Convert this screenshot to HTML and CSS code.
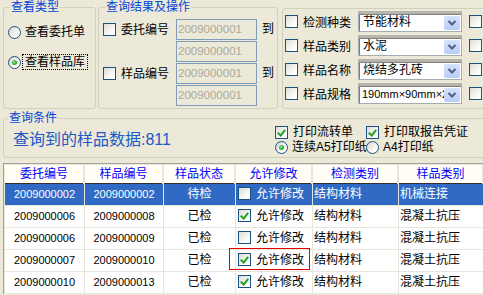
FILE: index.html
```html
<!DOCTYPE html>
<html lang="zh-CN">
<head>
    <meta charset="UTF-8">
    <meta name="viewport" content="width=device-width, initial-scale=1.0">
    <title>样品库查询</title>
    <link rel="stylesheet" href="styles.css">
</head>
<body>
    <div class="top">
        <fieldset class="group group-type">
            <legend>查看类型</legend>
            <label class="opt"><span class="radio"></span>查看委托单</label>
            <label class="opt"><span class="radio checked"></span><span class="focus">查看样品库</span></label>
        </fieldset>

        <fieldset class="group group-range">
            <legend>查询结果及操作</legend>
            <div class="range">
                <label class="opt range-label"><span class="check"></span>委托编号</label>
                <div class="boxes">
                    <span class="textbox">2009000001</span>
                    <span class="textbox">2009000001</span>
                </div>
                <span class="to">到</span>
            </div>
            <div class="range">
                <label class="opt range-label"><span class="check"></span>样品编号</label>
                <div class="boxes">
                    <span class="textbox">2009000001</span>
                    <span class="textbox">2009000001</span>
                </div>
                <span class="to">到</span>
            </div>
        </fieldset>

        <fieldset class="group group-filter">
            <div class="filter-row">
                <span class="check"></span>
                <span class="filter-label">检测种类</span>
                <div class="combo">
                    <span class="combo-text">节能材料</span>
                    <span class="combo-btn"><svg width="16" height="14" viewBox="0 0 16 14"><polyline points="4.5,5 8,8.5 11.5,5" fill="none" stroke="#4D6185" stroke-width="2"/></svg></span>
                </div>
                <span class="check extra"></span>
            </div>
            <div class="filter-row">
                <span class="check"></span>
                <span class="filter-label">样品类别</span>
                <div class="combo">
                    <span class="combo-text">水泥</span>
                    <span class="combo-btn"><svg width="16" height="14" viewBox="0 0 16 14"><polyline points="4.5,5 8,8.5 11.5,5" fill="none" stroke="#4D6185" stroke-width="2"/></svg></span>
                </div>
                <span class="check extra"></span>
            </div>
            <div class="filter-row">
                <span class="check"></span>
                <span class="filter-label">样品名称</span>
                <div class="combo">
                    <span class="combo-text">烧结多孔砖</span>
                    <span class="combo-btn"><svg width="16" height="14" viewBox="0 0 16 14"><polyline points="4.5,5 8,8.5 11.5,5" fill="none" stroke="#4D6185" stroke-width="2"/></svg></span>
                </div>
                <span class="check extra"></span>
            </div>
            <div class="filter-row">
                <span class="check"></span>
                <span class="filter-label">样品规格</span>
                <div class="combo">
                    <span class="combo-text small">190mm×90mm×240mm</span>
                    <span class="combo-btn"><svg width="16" height="14" viewBox="0 0 16 14"><polyline points="4.5,5 8,8.5 11.5,5" fill="none" stroke="#4D6185" stroke-width="2"/></svg></span>
                </div>
                <span class="check extra"></span>
            </div>
        </fieldset>
    </div>

    <fieldset class="group group-query">
        <legend>查询条件</legend>
        <div class="query-body">
            <div class="count">查询到的样品数据:811</div>
            <div class="print">
                <label class="opt"><span class="check checked"></span>打印流转单</label>
                <label class="opt"><span class="check checked"></span>打印取报告凭证</label>
                <label class="opt"><span class="radio checked"></span>连续A5打印纸</label>
                <label class="opt"><span class="radio"></span>A4打印纸</label>
            </div>
        </div>
    </fieldset>

    <div class="grid">
        <table>
            <colgroup>
                <col class="w-entrust">
                <col class="w-sample">
                <col class="w-state">
                <col class="w-edit">
                <col class="w-kind">
                <col class="w-type">
            </colgroup>
            <thead>
                <tr>
                    <th>委托编号</th>
                    <th>样品编号</th>
                    <th>样品状态</th>
                    <th>允许修改</th>
                    <th>检测类别</th>
                    <th>样品类别</th>
                </tr>
            </thead>
            <tbody>
                <tr class="selected">
                    <td class="num">2009000002</td>
                    <td class="num">2009000002</td>
                    <td class="center">待检</td>
                    <td class="edit"><span class="check"></span>允许修改</td>
                    <td class="left">结构材料</td>
                    <td class="left">机械连接</td>
                </tr>
                <tr>
                    <td class="num">2009000006</td>
                    <td class="num">2009000008</td>
                    <td class="center">已检</td>
                    <td class="edit"><span class="check checked"></span>允许修改</td>
                    <td class="left">结构材料</td>
                    <td class="left">混凝土抗压</td>
                </tr>
                <tr>
                    <td class="num">2009000006</td>
                    <td class="num">2009000009</td>
                    <td class="center">已检</td>
                    <td class="edit"><span class="check"></span>允许修改</td>
                    <td class="left">结构材料</td>
                    <td class="left">混凝土抗压</td>
                </tr>
                <tr>
                    <td class="num">2009000007</td>
                    <td class="num">2009000010</td>
                    <td class="center">已检</td>
                    <td class="edit"><span class="check checked"></span>允许修改<span class="mark"></span></td>
                    <td class="left">结构材料</td>
                    <td class="left">混凝土抗压</td>
                </tr>
                <tr>
                    <td class="num">2009000010</td>
                    <td class="num">2009000013</td>
                    <td class="center">已检</td>
                    <td class="edit"><span class="check checked"></span>允许修改</td>
                    <td class="left">结构材料</td>
                    <td class="left">混凝土抗压</td>
                </tr>
            </tbody>
        </table>
    </div>
</body>
</html>
```

FILE: styles.css
```css
* {
    box-sizing: border-box;
}
html, body {
    margin: 0;
    overflow: hidden;
}
body {
    width: 483px;
    height: 295px;
    background-color: #ECE9D8;
    font-family: "Liberation Sans", "Noto Sans CJK SC", sans-serif;
    font-size: 12px;
    color: #000;
}

/* group boxes */
.group {
    margin: 0;
    padding: 0;
    min-width: 0;
    border: 1px solid #D0D0BF;
    border-radius: 3px;
}
.group legend {
    padding: 0 1px;
    margin-left: 2px;
    color: #0046D5;
    font-size: 12px;
    line-height: 14px;
}
.top {
    display: flex;
    align-items: flex-start;
    height: 109px;
}
.group-type {
    flex: none;
    width: 93px;
    height: 109px;
    margin-left: 3px;
    padding: 10px 0 0 4px;
}
.group-range {
    flex: none;
    width: 180px;
    height: 109px;
    margin-left: 2px;
    padding: 5px 0 0 4px;
}
.group-filter {
    flex: none;
    width: 230px;
    height: 101px;
    margin: 8px 0 0 4px;
    padding: 2px 0 0 2px;
}
.group-query {
    width: 500px;
    height: 47px;
    margin: 2px 0 0 3px;
    padding: 0 0 0 9px;
}
.group-query legend {
    margin-left: -5px;
}

/* options */
.opt {
    display: flex;
    align-items: center;
    height: 16px;
    line-height: 16px;
    white-space: nowrap;
}
.group-type .opt + .opt {
    margin-top: 14px;
}
.focus {
    margin-left: -3px;
    padding: 0 2px;
    border: 1px dotted #000;
    line-height: 14px;
}
.radio {
    position: relative;
    flex: none;
    width: 13px;
    height: 13px;
    margin-right: 4px;
    border: 1px solid #1C5180;
    border-radius: 50%;
    background: linear-gradient(135deg, #D6D5CC, #FFFFFF 75%);
}
.radio.checked::after {
    content: "";
    position: absolute;
    left: 3px;
    top: 3px;
    width: 5px;
    height: 5px;
    border-radius: 50%;
    background: radial-gradient(circle at 40% 40%, #8CE08C, #21A121 70%);
}
.check {
    position: relative;
    flex: none;
    display: inline-block;
    width: 13px;
    height: 13px;
    margin-right: 5px;
    border: 1px solid #1C5180;
    background: linear-gradient(135deg, #DCDCD7, #FFFFFF 80%);
}
.check.checked::after {
    content: "";
    position: absolute;
    left: 3px;
    top: 1px;
    width: 3px;
    height: 6px;
    border: solid #21A121;
    border-width: 0 2px 2px 0;
    transform: rotate(40deg);
}

/* number ranges */
.range {
    display: flex;
    align-items: flex-start;
}
.range + .range {
    margin-top: 1px;
}
.range-label {
    width: 73px;
    height: 21px;
}
.boxes {
    display: flex;
    flex-direction: column;
    gap: 1px;
}
.textbox {
    width: 81px;
    height: 21px;
    padding-left: 1px;
    border: 1px solid #7F9DB9;
    color: #ACA899;
    font-size: 11.5px;
    line-height: 19px;
}
.to {
    margin-left: 5px;
    line-height: 21px;
}

/* filters */
.filter-row {
    display: flex;
    align-items: center;
    height: 21px;
}
.filter-row + .filter-row {
    margin-top: 3px;
}
.filter-label {
    width: 55px;
    white-space: nowrap;
}
.combo {
    display: flex;
    flex: none;
    width: 104px;
    height: 21px;
    border: 1px solid #A5ACB2;
    border-top: 3px solid #B6B5AB;
    background-color: #fff;
    box-shadow: inset 1px 1px 0 #808080;
}
.combo-text {
    flex: 1;
    overflow: hidden;
    padding-left: 4px;
    white-space: nowrap;
    line-height: 17px;
}
.combo-text.small {
    padding-left: 3px;
    font-size: 11px;
}
.combo-btn {
    flex: none;
    width: 16px;
    height: 14px;
    margin: 2px 1px 0 0;
    border-radius: 2px;
    background: linear-gradient(#D6E3FC, #B9CCF8);
}
.combo-btn svg {
    display: block;
}
.check.extra {
    margin: 0 0 0 7px;
}

/* query summary */
.query-body {
    display: flex;
}
.count {
    width: 262px;
    margin-top: 5px;
    color: #2158C8;
    font-size: 16px;
    line-height: 20px;
}
.print {
    display: grid;
    grid-template-columns: 91px auto;
}
.print .opt {
    height: 15px;
    line-height: 15px;
}

/* data grid */
.grid {
    width: 480px;
    margin: 5px 0 0 3px;
    padding: 1px 0 0 1px;
    border-top: 1px solid #A0A0A0;
    border-left: 1px solid #A0A0A0;
    overflow: hidden;
}
table {
    width: 479px;
    table-layout: fixed;
    border-collapse: separate;
    border-spacing: 0;
}
.w-entrust { width: 80px; }
.w-sample { width: 79px; }
.w-state { width: 72px; }
.w-edit { width: 77px; }
.w-kind { width: 86px; }
.w-type { width: 85px; }
th {
    padding: 0;
    border-right: 2px solid #E8E6DC;
    background-color: #FFFDF5;
    box-shadow: inset 0 -1px 0 #303030;
    color: #0000FF;
    font-weight: normal;
    line-height: 19px;
}
td {
    padding: 0;
    border-right: 1px solid #E8E6DC;
    border-bottom: 1px solid #E8E6DC;
    background-color: #fff;
    line-height: 21px;
    white-space: nowrap;
    overflow: hidden;
}
td.num {
    text-align: center;
    font-size: 11px;
}
td.center {
    text-align: center;
}
td.left {
    padding-left: 1px;
}
td.edit {
    position: relative;
    padding-left: 2px;
    overflow: visible;
}
td.edit .check {
    vertical-align: -2px;
}
tr.selected td {
    background-color: #316AC5;
    color: #fff;
}
.mark {
    position: absolute;
    left: -7px;
    top: -2px;
    width: 81px;
    height: 22px;
    border: 1px solid #E00000;
}
```
